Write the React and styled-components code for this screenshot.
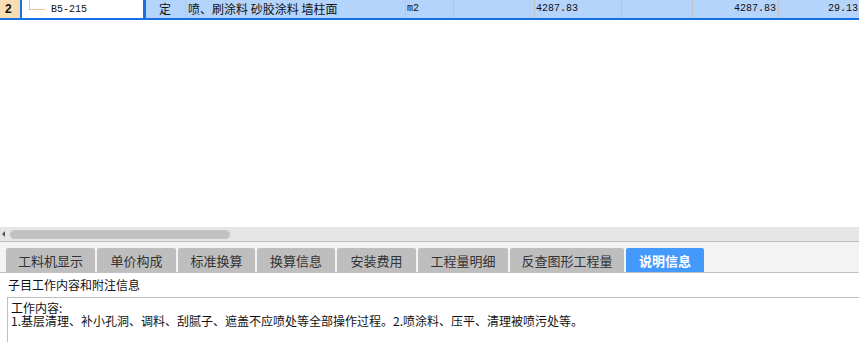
import React from "react";
import styled, { createGlobalStyle } from "styled-components";

const GlobalStyle = createGlobalStyle`
  html, body {
    margin: 0;
    padding: 0;
    background: #ffffff;
  }
  body {
    font-family: "Noto Sans CJK SC", "Liberation Sans", sans-serif;
  }
`;

const Page = styled.div`
  width: 859px;
  height: 342px;
  display: flex;
  flex-direction: column;
  overflow: hidden;
  background: #ffffff;
`;

const GridRow = styled.div`
  display: flex;
  flex: none;
  height: 18px;
  border-bottom: 2px solid #1670e6;
  background: #b5d4fb;
  font-size: 12px;
  color: #111;
`;

const RowNum = styled.div`
  width: 20px;
  flex: none;
  background: #f6deb2;
  font-family: "Liberation Sans", sans-serif;
  font-weight: 700;
  font-size: 12px;
  line-height: 18px;
  padding-left: 5px;
  box-sizing: border-box;
`;

const CodeCell = styled.div`
  width: 126px;
  flex: none;
  box-sizing: border-box;
  background: #ffffff;
  border-left: 2px solid #1670e6;
  border-right: 3px solid #1670e6;
  display: flex;
  align-items: center;
  font-family: "Liberation Mono", monospace;
  font-size: 10px;
`;

const TreeLine = styled.span`
  width: 15px;
  height: 9px;
  margin-left: 7px;
  margin-top: -9px;
  margin-right: 6px;
  border-left: 1px solid #f3c487;
  border-bottom: 1px solid #f3c487;
  flex: none;
`;

const Cell = styled.div`
  width: ${(p) => p.$w}px;
  flex: none;
  box-sizing: border-box;
  border-right: ${(p) => (p.$last ? "none" : "1px solid #c4c4c4")};
  line-height: 18px;
  padding: 0 ${(p) => (p.$align === "right" ? "2px" : "1px")} 0 ${(p) => p.$pl || 1}px;
  text-align: ${(p) => p.$align || "left"};
  white-space: nowrap;
  overflow: hidden;
  font-family: ${(p) =>
    p.$mono ? '"Liberation Mono", monospace' : '"Noto Sans CJK SC", sans-serif'};
  font-size: ${(p) => (p.$mono ? "10px" : "12px")};
`;

const Blank = styled.div`
  height: 207px;
  flex: none;
`;

const ScrollTrack = styled.div`
  height: 14px;
  flex: none;
  background: #e6e6e6;
  border-bottom: 1px solid #bdbdbd;
  display: flex;
  align-items: center;
  padding-left: 2px;
  gap: 5px;
`;

const ArrowLeft = styled.span`
  width: 0;
  height: 0;
  border-top: 3px solid transparent;
  border-bottom: 3px solid transparent;
  border-right: 3px solid #555;
`;

const Thumb = styled.div`
  width: 220px;
  height: 9px;
  border-radius: 5px;
  background: #c2c2c2;
`;

const TabBar = styled.div`
  height: 24px;
  flex: none;
  padding: 6px 0 0 6px;
  background: #f3f3f3;
  border-bottom: 1px solid #c2c2c2;
  display: flex;
  gap: 2px;
`;

const Tab = styled.div`
  width: ${(p) => p.$w}px;
  height: 24px;
  flex: none;
  display: flex;
  align-items: center;
  justify-content: center;
  border-radius: 2px 2px 0 0;
  font-size: 13px;
  background: ${(p) => (p.$active ? "#4499fd" : "#bebebe")};
  color: ${(p) => (p.$active ? "#ffffff" : "#333333")};
  font-weight: ${(p) => (p.$active ? 700 : 400)};
`;

const InfoTitle = styled.div`
  flex: none;
  font-size: 12px;
  color: #111;
  line-height: 14px;
  padding: 5px 0 5px 8px;
`;

const InfoBox = styled.div`
  flex: 1;
  margin-left: 7px;
  border-top: 1px solid #bfbfbf;
  border-left: 1px solid #bfbfbf;
  padding: 3px 0 0 3px;
  font-size: 12px;
  color: #111;
`;

const InfoLine = styled.div`
  height: 13px;
  line-height: 13px;
  white-space: nowrap;
`;

const tabs = [
  { label: "工料机显示", w: 89 },
  { label: "单价构成", w: 79 },
  { label: "标准换算", w: 77 },
  { label: "换算信息", w: 78 },
  { label: "安装费用", w: 79 },
  { label: "工程量明细", w: 90 },
  { label: "反查图形工程量", w: 114 },
  { label: "说明信息", w: 78, active: true },
];

export default function App() {
  return (
    <Page>
      <GlobalStyle />
      <GridRow>
        <RowNum>2</RowNum>
        <CodeCell>
          <TreeLine />
          B5-215
        </CodeCell>
        <Cell $w={40} $pl={13}>定</Cell>
        <Cell $w={220} $pl={2}>喷、刷涂料 砂胶涂料 墙柱面</Cell>
        <Cell $w={48} $mono>m2</Cell>
        <Cell $w={81} />
        <Cell $w={87} $mono>4287.83</Cell>
        <Cell $w={71} />
        <Cell $w={86} $mono $align="right">4287.83</Cell>
        <Cell $w={81} $mono $align="right" $last>29.13</Cell>
      </GridRow>
      <Blank />
      <ScrollTrack>
        <ArrowLeft />
        <Thumb />
      </ScrollTrack>
      <TabBar>
        {tabs.map((t) => (
          <Tab key={t.label} $w={t.w} $active={t.active}>
            {t.label}
          </Tab>
        ))}
      </TabBar>
      <InfoTitle>子目工作内容和附注信息</InfoTitle>
      <InfoBox>
        <InfoLine>工作内容:</InfoLine>
        <InfoLine>
          1.基层清理、补小孔洞、调料、刮腻子、遮盖不应喷处等全部操作过程。2.喷涂料、压平、清理被喷污处等。
        </InfoLine>
      </InfoBox>
    </Page>
  );
}
